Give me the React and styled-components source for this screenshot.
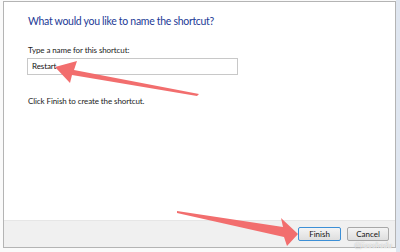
import React from 'react'
import styled, { createGlobalStyle } from 'styled-components'

const Global = createGlobalStyle`
    html, body { margin:0; padding:0; background:#f4f5f7; }
    body { width:400px; height:252px; overflow:hidden; font-family:Lato,"Noto Sans",sans-serif; }
`

const Stage = styled.div`
    position:relative;
    width:400px;
    height:252px;
    padding:1px 0 0 3px;
    box-sizing:border-box;
    background:linear-gradient(to right, #fafafa 0, #fafafa 396px, #dfe6f0 396px);
`

const Window = styled.div`
    width:393px;
    height:247px;
    box-sizing:border-box;
    border:1px solid #b4b4b4;
    background:#fff;
    display:flex;
    flex-direction:column;
`

const Body = styled.div`
    flex:1;
    padding:12px 0 0 24px;
`

const Title = styled.h1`
    margin:0;
    font-size:10.5px;
    letter-spacing:-0.3px;
    font-weight:400;
    color:#1c3a96;
    line-height:15px;
`

const Text = styled.div`
    font-size:8px;
    letter-spacing:-0.1px;
    color:#222;
    line-height:11px;
    margin-top:${p => p.top}px;
`

const Input = styled.div`
    margin-top:2px;
    margin-left:-1px;
    width:211px;
    height:17px;
    box-sizing:border-box;
    border:1px solid #c8c8c8;
    padding:0 4px;
    font-size:8px;
    letter-spacing:-0.1px;
    line-height:15px;
    color:#111;
`

const Footer = styled.div`
    height:26px;
    background:#f0f0f0;
    border-top:1px solid #e6e6e6;
    display:flex;
    align-items:center;
    justify-content:flex-end;
    gap:6px;
    padding-right:6px;
`

const Button = styled.div`
    width:${p => p.w}px;
    height:14px;
    box-sizing:border-box;
    border:1px solid ${p => p.primary ? '#3c8fd6' : '#a8a8a8'};
    border-radius:2px;
    background:linear-gradient(#f4f4f4, #dedede);
    font-size:8px;
    line-height:12px;
    text-align:center;
    color:#111;
`

const Watermark = styled.div`
    position:absolute;
    right:8px;
    bottom:2px;
    font-size:8px;
    font-style:italic;
    color:rgba(255,255,255,0.85);
    text-shadow:0 0 1px #999;
`

const Overlay = styled.svg`
    position:absolute;
    left:0;
    top:0;
    pointer-events:none;
`

export default function App() {
    return (
        <>
            <Global />
            <Stage>
                <Window>
                    <Body>
                        <Title>What would you like to name the shortcut?</Title>
                        <Text top={16}>Type a name for this shortcut:</Text>
                        <Input>Restart</Input>
                        <Text top={21}>Click Finish to create the shortcut.</Text>
                    </Body>
                    <Footer>
                        <Button primary w={43}>Finish</Button>
                        <Button w={42}>Cancel</Button>
                    </Footer>
                </Window>
                <Watermark>@jiaoshedu</Watermark>
                <Overlay width="400" height="252">
                    <polygon points="55,67 77,61 74,70 199,94 197,96 72,75 70,83" fill="#f26e6e" />
                    <polygon points="298,234 281,218 283,227 177,211 177,213 284,237 287,246" fill="#f26e6e" />
                </Overlay>
            </Stage>
        </>
    )
}
